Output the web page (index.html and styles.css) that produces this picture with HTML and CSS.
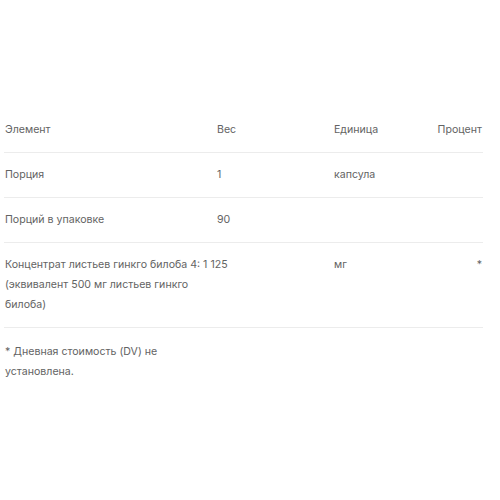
FILE: index.html
```html
<!DOCTYPE html>
<html lang="ru">
<head>
<meta charset="utf-8">
<link rel="stylesheet" href="styles.css">
</head>
<body>
<div class="wrap">
  <table class="facts">
    <colgroup>
      <col class="c1"><col class="c2"><col class="c3"><col class="c4">
    </colgroup>
    <thead>
      <tr><th>Элемент</th><th>Вес</th><th>Единица</th><th class="r">Процент</th></tr>
    </thead>
    <tbody>
      <tr><td>Порция</td><td>1</td><td>капсула</td><td class="r"></td></tr>
      <tr><td>Порций в упаковке</td><td>90</td><td></td><td class="r"></td></tr>
      <tr><td colspan="2" class="long"><span class="name">Концентрат листьев гинкго билоба 4: 1 125 (эквивалент 500 мг листьев гинкго<br>билоба)</span></td><td>мг</td><td class="r star">*</td></tr>
    </tbody>
  </table>
  <p class="note">* Дневная стоимость (DV) не установлена.</p>
</div>
</body>
</html>
```
FILE: styles.css
```css
html, body { margin: 0; padding: 0; background: #fff; }
body { font-family: Inter, "Noto Sans", sans-serif; font-size: 10.6px; color: #636363; }
.wrap { padding: 108px 17px 0 4px; }
.facts { width: 479px; border-collapse: collapse; table-layout: fixed; }
.c1 { width: 212px; }
.c2 { width: 117px; }
.c3 { width: 100px; }
.c4 { width: 50px; }
.facts th, .facts td {
  text-align: left; font-weight: 400; vertical-align: top;
  padding: 12px 1px 12px 1px; line-height: 20px;
  border-bottom: 1px solid #ececec;
}
.facts .name { display: block; width: 232px; }
.facts .r { text-align: right; }
.note { margin: 14px 0 0 1px; width: 165px; line-height: 20px; }
```
